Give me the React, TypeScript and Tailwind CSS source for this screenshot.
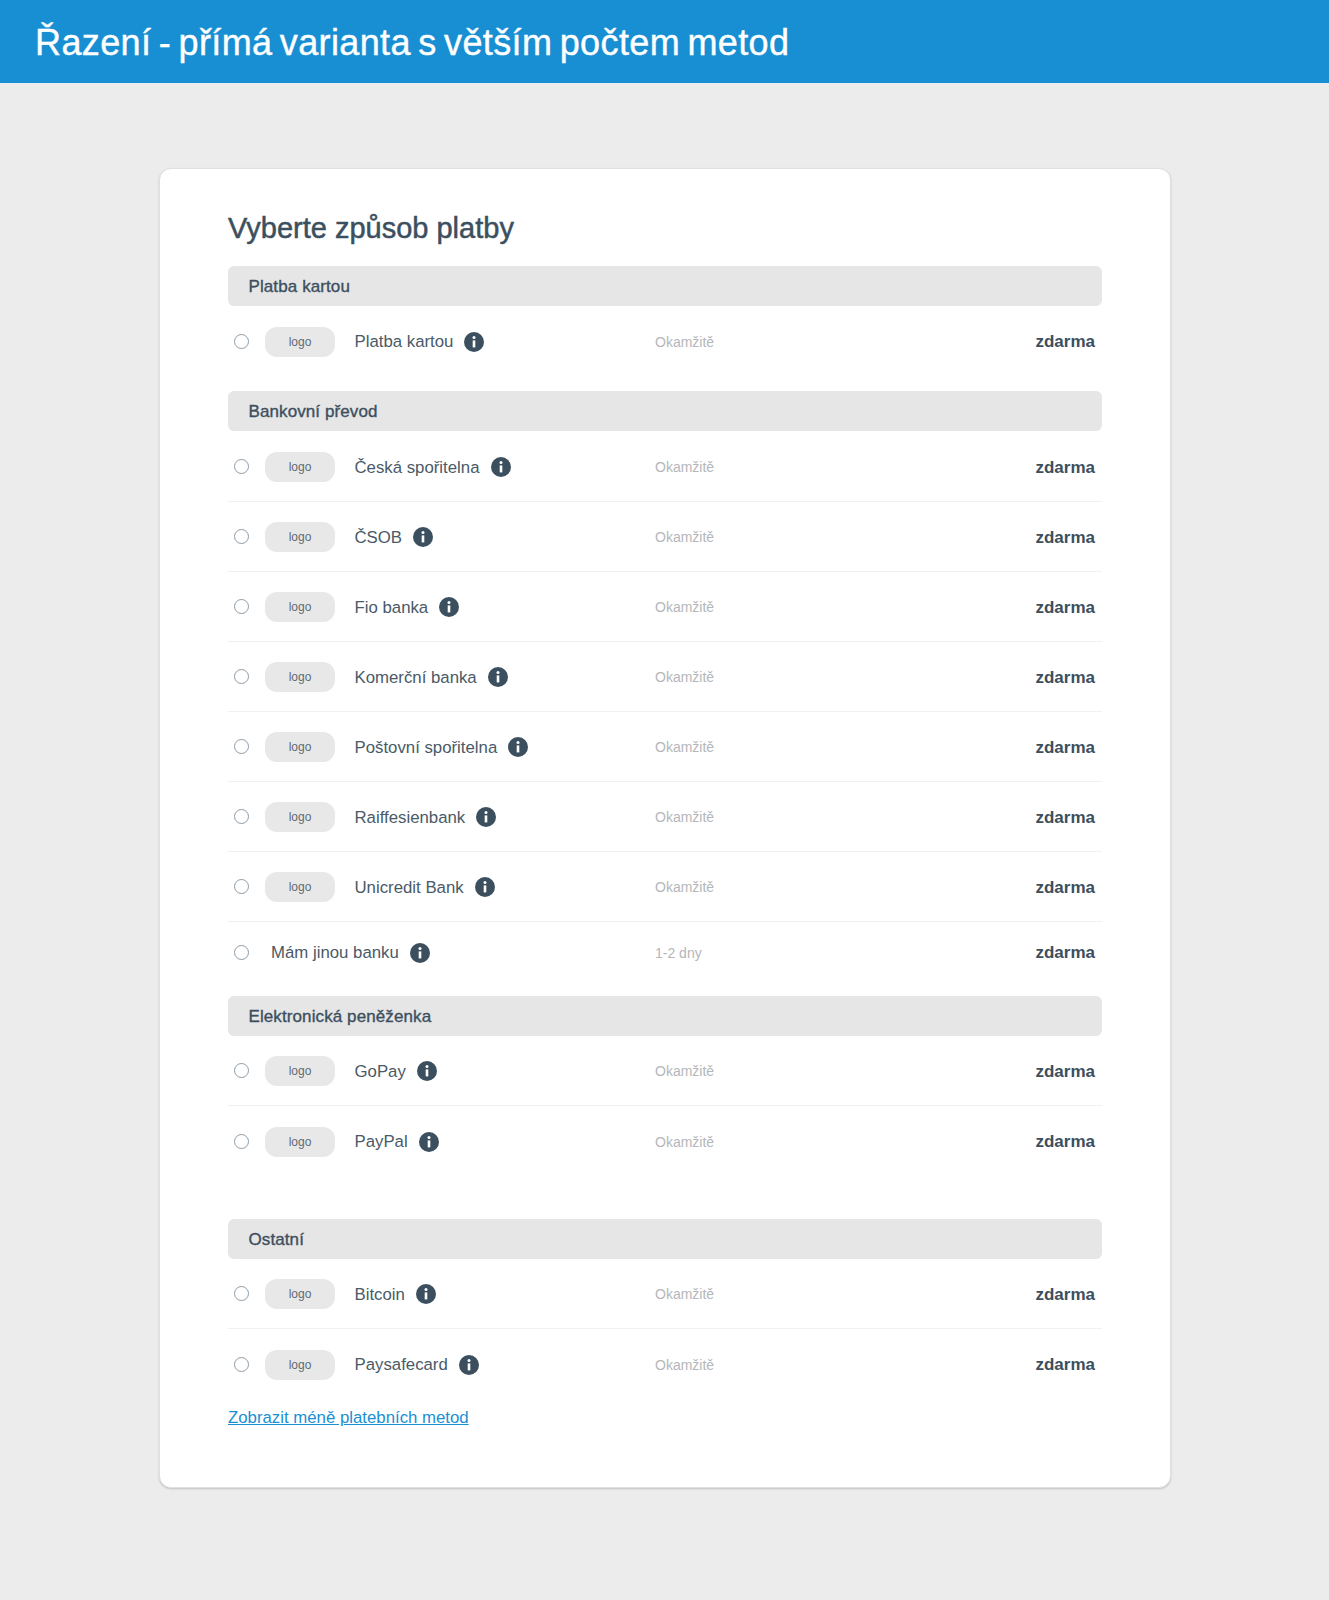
const sections = [
  {
    title: 'Platba kartou',
    className: 'mb-[15px]',
    rowsClass: '',
    rows: [{ name: 'Platba kartou' }],
  },
  {
    title: 'Bankovní převod',
    className: 'mb-0',
    rowsClass: 'pt-[1px]',
    rows: [
      { name: 'Česká spořitelna' },
      { name: 'ČSOB' },
      { name: 'Fio banka' },
      { name: 'Komerční banka' },
      { name: 'Poštovní spořitelna' },
      { name: 'Raiffesienbank' },
      { name: 'Unicredit Bank' },
      { name: 'Mám jinou banku', noLogo: true, time: '1-2 dny' },
    ],
  },
  {
    title: 'Elektronická peněženka',
    className: 'mb-[43px]',
    rowsClass: '',
    rows: [{ name: 'GoPay' }, { name: 'PayPal' }],
  },
  {
    title: 'Ostatní',
    className: 'mb-0',
    rowsClass: '',
    rows: [{ name: 'Bitcoin' }, { name: 'Paysafecard' }],
  },
];

function InfoIcon() {
  return (
    <svg width="20" height="20" viewBox="0 0 20 20" className="shrink-0 -mt-[1px]">
      <circle cx="10" cy="10" r="10" fill="#3c4f5e" />
      <circle cx="10" cy="5.6" r="1.5" fill="#fff" />
      <rect x="8.7" y="8.4" width="2.6" height="7" fill="#fff" />
    </svg>
  );
}

interface RowProps {
  name: string;
  noLogo?: boolean;
  time?: string;
  last: boolean;
}

function MethodRow({ name, noLogo, time, last }: RowProps) {
  return (
    <div
      className={`grid grid-cols-[421px_1fr_auto] items-center pl-[6px] pr-[7px] ${
        noLogo ? 'h-[74px] pb-[12px]' : 'h-[70px] pt-[2px]'
      } ${last ? '' : 'border-b border-[#f0f0f0]'}`}
    >
      <div className="flex items-center">
        <span className="w-[15px] h-[15px] -mt-[2px] rounded-full border border-[#8f9ba5] bg-white shrink-0" />
        {noLogo ? (
          <span className="w-[22px]" />
        ) : (
          <span className="ml-4 mr-[19.5px] -mt-[1px] w-[70px] h-[30px] rounded-[12px] bg-[#e8e8e8] flex items-center justify-center text-[12px] text-[#5f6b75]">
            logo
          </span>
        )}
        <span className="text-[16.8px] text-[#4a5a67] mr-[11px]">{name}</span>
        <InfoIcon />
      </div>
      <span className="text-[14px] text-[#b4b7ba]">{time ?? 'Okamžitě'}</span>
      <span className="text-[17px] font-bold text-[#3c4f5e]">zdarma</span>
    </div>
  );
}

export default function App() {
  return (
    <div className="min-h-[1600px] bg-[#ececec] font-['Liberation_Sans',Arial,sans-serif]">
      <header className="h-[83px] bg-[#188fd3] flex items-center px-[35px] pt-[2px]">
        <h1 className="text-[36px] text-white tracking-[0.38px] [word-spacing:-3px] [-webkit-text-stroke:0.4px_white]">
          Řazení - přímá varianta s větším počtem metod
        </h1>
      </header>

      <main className="w-[1012px] h-[1320px] mt-[85px] ml-[159px] bg-white rounded-[12px] border border-[#e0e0e0] shadow-[0_1px_2px_rgba(0,0,0,0.18)] px-[68px] pt-[41px]">
        <h2 className="text-[29px] leading-[36px] text-[#3c4f5e] mb-[20px] [-webkit-text-stroke:0.5px_#3c4f5e]">
          Vyberte způsob platby
        </h2>
        {sections.map((s) => (
          <section key={s.title} className={s.className}>
            <div className="h-[40px] pt-[2px] rounded-[6px] bg-[#e6e6e6] flex items-center pl-[20.5px] text-[17px] tracking-[0.1px] text-[#3c4f5e] [-webkit-text-stroke:0.35px_#3c4f5e]">
              {s.title}
            </div>
            <div className={s.rowsClass}>
              {s.rows.map((r, i) => (
                <MethodRow key={r.name} {...r} last={i === s.rows.length - 1} />
              ))}
            </div>
          </section>
        ))}
        <a href="#" className="block mt-[6px] text-[16.8px] text-[#1a8fd3] underline">
          Zobrazit méně platebních metod
        </a>
      </main>
    </div>
  );
}
